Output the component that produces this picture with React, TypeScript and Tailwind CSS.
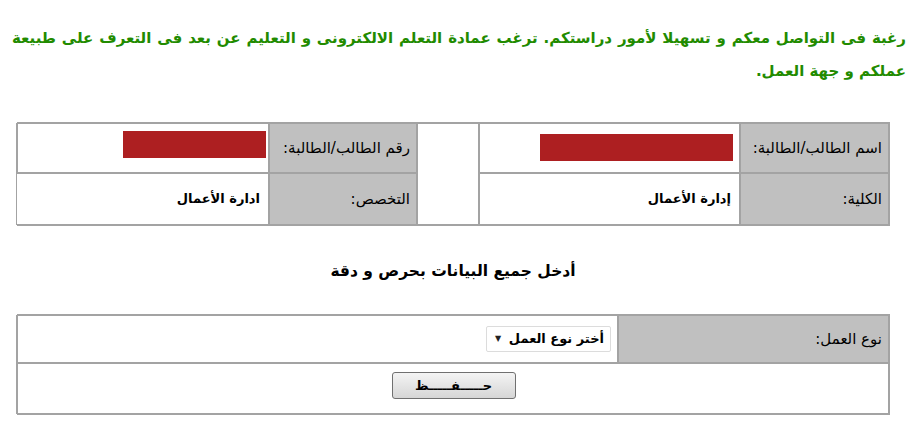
import React from 'react';

const cell = 'border border-[#a3a3a3] flex items-center';
const label = `${cell} bg-[#c0c0c0] justify-start pr-[6px] text-[15px] text-black`;
const value = `${cell} bg-white justify-start pr-[8px] text-[13px] font-bold text-black`;

const RedBar: React.FC<{ w: string; mt: string }> = ({ w, mt }) => (
  <div className={`h-[27px] bg-[#ad1f21] ${w} ${mt}`} />
);

const App: React.FC = () => {
  return (
    <div
      dir="rtl"
      className="w-[919px] h-[440px] bg-white overflow-hidden"
      style={{ fontFamily: '"DejaVu Sans", "Liberation Sans", sans-serif' }}
    >
      <p className="pt-[22px] pr-[13px] pl-[12px] text-[15px] font-bold leading-[33px] text-[#228b00] text-justify">
        رغبة فى التواصل معكم و تسهيلا لأمور دراستكم. ترغب عمادة التعلم الالكترونى و التعليم عن بعد فى التعرف على طبيعة عملكم و جهة العمل.
      </p>

      <div className="mr-[29px] mt-[34px] w-[873px] grid grid-cols-[149px_261px_62px_148px_253px] grid-rows-[50px_52px] border border-[#a3a3a3]">
        <div className={label}>اسم الطالب/الطالبة:</div>
        <div className={`${cell} items-start pr-[6px]`}>
          <RedBar w="w-[193px]" mt="mt-[10px]" />
        </div>
        <div className={`${cell} row-span-2`} />
        <div className={label}>رقم الطالب/الطالبة:</div>
        <div className={`${cell} items-start pr-[2px]`}>
          <RedBar w="w-[143px]" mt="mt-[7px]" />
        </div>

        <div className={label}>الكلية:</div>
        <div className={value}>إدارة الأعمال</div>
        <div className={label}>التخصص:</div>
        <div className={value}>ادارة الأعمال</div>
      </div>

      <h2 className="mt-[30px] mr-[13px] text-center text-[15.5px] font-bold leading-[30px] text-black">
        أدخل جميع البيانات بحرص و دقة
      </h2>

      <div className="mr-[29px] mt-[28px] w-[873px] grid grid-cols-[271px_602px] grid-rows-[48px_51px] border border-[#a3a3a3]">
        <div className={label}>نوع العمل:</div>
        <div className={`${cell} pr-[6px]`}>
          <div className="flex h-[26px] w-[125px] items-center justify-between rounded-[2px] border border-[#dcdcdc] bg-white pr-[6px] pl-[8px] text-[13px] font-bold text-black">
            <span>أختر نوع العمل</span>
            <span className="text-[8px] text-[#222]">▼</span>
          </div>
        </div>
        <div className={`${cell} col-span-2 justify-center items-start`}>
          <button className="mt-[8px] mr-[-2px] h-[27px] w-[124px] rounded-[3px] border border-[#707070] bg-gradient-to-b from-[#f4f4f4] to-[#d6d6d6] text-[13px] font-bold text-black">
            حـــــفـــــظ
          </button>
        </div>
      </div>
    </div>
  );
};

export default App;
